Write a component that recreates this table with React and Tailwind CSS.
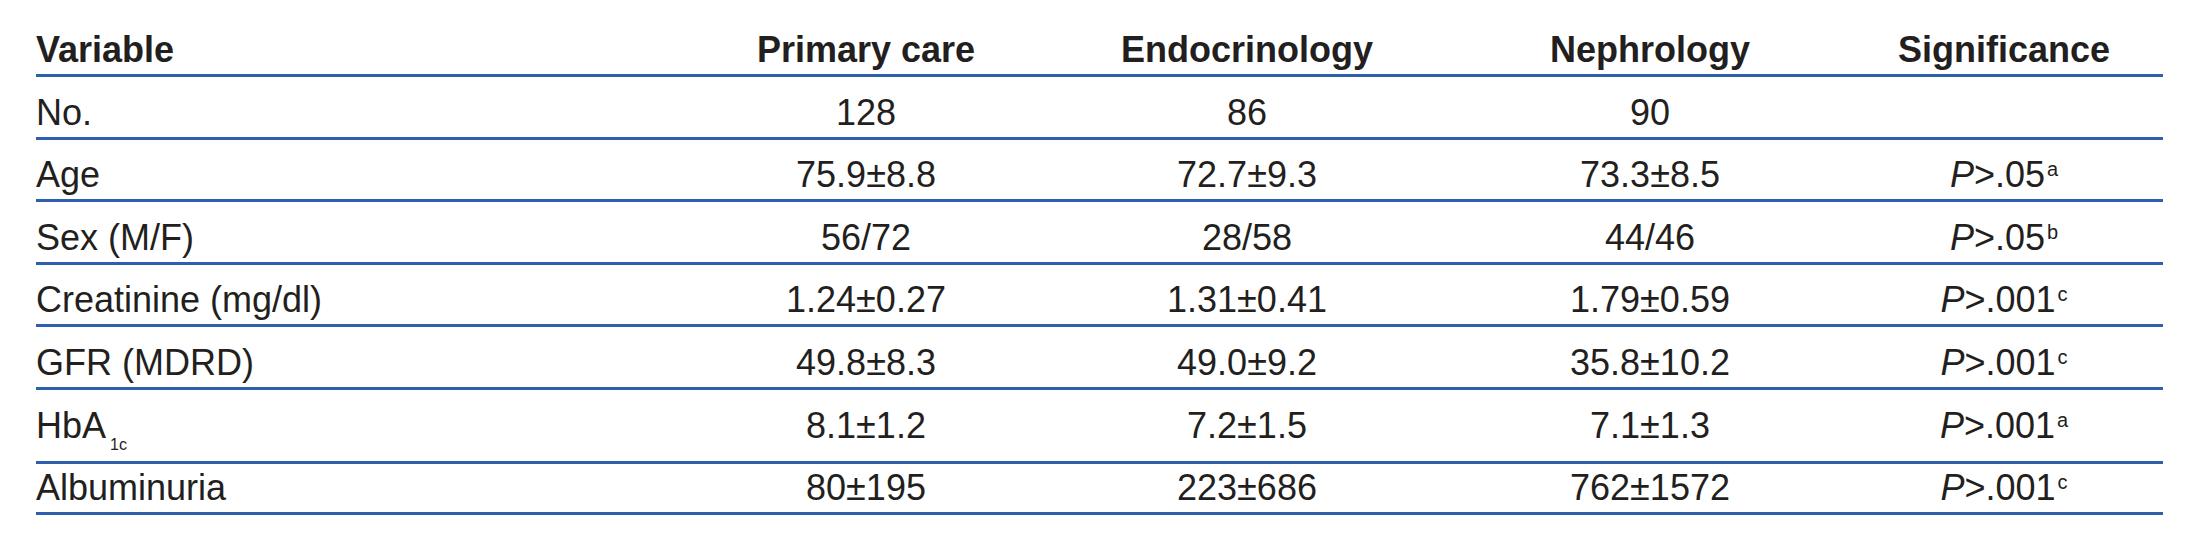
const COLS = "grid grid-cols-[657px_346px_416px_390px_318px] items-end";

const ROWS = [
  { label: "No.", vals: ["128", "86", "90"], sig: null, h: "h-[62.5px]", pb: "pb-[6px]" },
  { label: "Age", vals: ["75.9±8.8", "72.7±9.3", "73.3±8.5"], sig: [".05", "a"], h: "h-[62.5px]", pb: "pb-[6px]" },
  { label: "Sex (M/F)", vals: ["56/72", "28/58", "44/46"], sig: [".05", "b"], h: "h-[62.5px]", pb: "pb-[6px]" },
  { label: "Creatinine (mg/dl)", vals: ["1.24±0.27", "1.31±0.41", "1.79±0.59"], sig: [".001", "c"], h: "h-[62.5px]", pb: "pb-[6px]" },
  { label: "GFR (MDRD)", vals: ["49.8±8.3", "49.0±9.2", "35.8±10.2"], sig: [".001", "c"], h: "h-[62.5px]", pb: "pb-[6px]" },
  { label: "hba", vals: ["8.1±1.2", "7.2±1.5", "7.1±1.3"], sig: [".001", "a"], h: "h-[74.5px]", pb: "pb-[17px]" },
  { label: "Albuminuria", vals: ["80±195", "223±686", "762±1572"], sig: [".001", "c"], h: "h-[51px]", pb: "pb-[6.5px]" },
];

function Label({ text }) {
  if (text === "hba") {
    return (
      <span>
        HbA<sub className="text-[16px] -bottom-[12px] ml-[4px]">1c</sub>
      </span>
    );
  }
  return <span>{text}</span>;
}

export default function App() {
  return (
    <div className="w-[2188px] h-[537px] bg-white pl-[36px] text-[#231f20] font-['Liberation_Sans',Arial,sans-serif] text-[36px] leading-none">
      <div className="w-[2127px]">
        {/* header */}
        <div className={`${COLS} h-[77px] pb-[6px] border-b-[3px] border-[#2c60ac] font-bold`}>
          <div>Variable</div>
          <div className="text-center">Primary care</div>
          <div className="text-center">Endocrinology</div>
          <div className="text-center">Nephrology</div>
          <div className="text-center">Significance</div>
        </div>

        {ROWS.map((row) => (
          <div key={row.label} className={`${COLS} ${row.h} ${row.pb} border-b-[3px] border-[#2c60ac]`}>
            <div>
              <Label text={row.label} />
            </div>
            {row.vals.map((v, i) => (
              <div key={i} className="text-center">{v}</div>
            ))}
            <div className="text-center">
              {row.sig && (
                <span>
                  <i>P</i>&gt;{row.sig[0]}
                  <sup className="text-[20px] -top-[11px] ml-[2px]">{row.sig[1]}</sup>
                </span>
              )}
            </div>
          </div>
        ))}
      </div>
    </div>
  );
}
